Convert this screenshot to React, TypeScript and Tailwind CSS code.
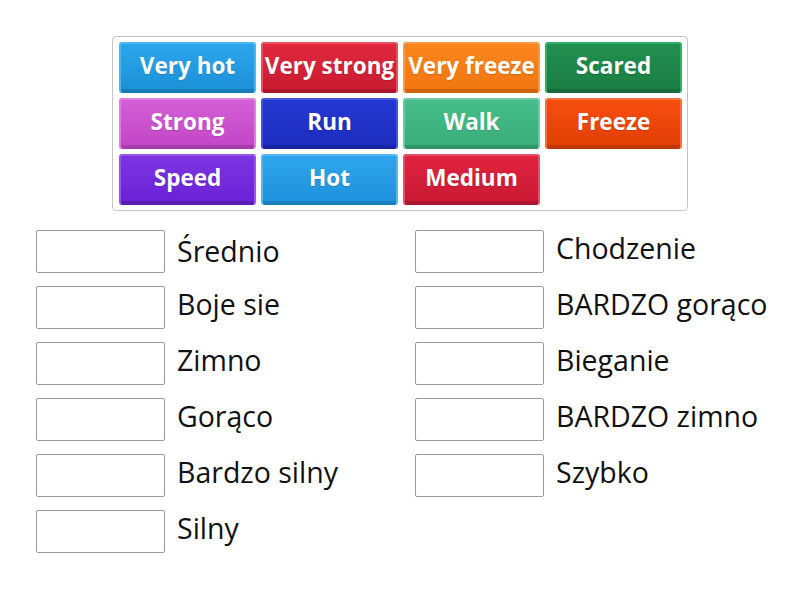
const tiles: { label: string; cls: string }[] = [
  { label: "Very hot", cls: "bg-gradient-to-b from-[#2ba6ec] to-[#1a8fd6] border-[#4cb6f0]" },
  { label: "Very strong", cls: "bg-gradient-to-b from-[#e0283e] to-[#c81a30] border-[#e6505f]" },
  { label: "Very freeze", cls: "bg-gradient-to-b from-[#fb861c] to-[#f07510] border-[#fb9a45]" },
  { label: "Scared", cls: "bg-gradient-to-b from-[#228f50] to-[#1a7d43] border-[#2fb165]" },
  { label: "Strong", cls: "bg-gradient-to-b from-[#d35fd6] to-[#c244c6] border-[#dd7fe0]" },
  { label: "Run", cls: "bg-gradient-to-b from-[#2438d2] to-[#1c2cbc] border-[#4656dc]" },
  { label: "Walk", cls: "bg-gradient-to-b from-[#46bd8a] to-[#38ad7a] border-[#6acca0]" },
  { label: "Freeze", cls: "bg-gradient-to-b from-[#f64e0e] to-[#e03e06] border-[#f87040]" },
  { label: "Speed", cls: "bg-gradient-to-b from-[#7d35e2] to-[#6a1fd6] border-[#9758e8]" },
  { label: "Hot", cls: "bg-gradient-to-b from-[#2da4ec] to-[#1e92dc] border-[#55b8f2]" },
  { label: "Medium", cls: "bg-gradient-to-b from-[#e0223f] to-[#c81a34] border-[#e65068]" },
];

const left = ["Średnio", "Boje sie", "Zimno", "Gorąco", "Bardzo silny", "Silny"];
const right = ["Chodzenie", "BARDZO gorąco", "Bieganie", "BARDZO zimno", "Szybko"];

function AnswerColumn({ items }: { items: string[] }) {
  return (
    <div className="w-[379px] shrink-0 flex flex-col gap-[13px]">
      {items.map((t) => (
        <div key={t} className="flex items-center h-[43px]">
          <div className="w-[129px] h-[43px] shrink-0 border border-[#9a9a9a] rounded-[2px] bg-white" />
          <span
            className={`ml-[12px] text-[28.5px] leading-none whitespace-nowrap text-[#111] ${
              t === "Średnio" ? "" : "-mt-[6px]"
            }`}
          >
            {t}
          </span>
        </div>
      ))}
    </div>
  );
}

export default function App() {
  return (
    <div className="w-[800px] h-[600px] bg-white font-['Open_Sans',sans-serif]">
      <div className="pt-[36px] flex justify-center">
        <div className="w-[576px] border border-[#c4c4c4] rounded-[4px] pl-[6px] pr-[6px] py-[5px]">
          <div className="grid grid-cols-[repeat(4,137px)] gap-[5px]">
            {tiles.map((t) => (
              <div
                key={t.label}
                className={`h-[51px] rounded-[3px] border-x-2 border-t-2 flex items-center justify-center text-white font-bold text-[22.5px] whitespace-nowrap shadow-[inset_0_-4px_0_rgba(0,0,0,0.14)] ${t.cls}`}
              >
                <span className="-mt-[6px] [text-shadow:0_1px_1px_rgba(0,0,0,0.15)]">{t.label}</span>
              </div>
            ))}
          </div>
        </div>
      </div>
      <div className="mt-[19px] flex pl-[36px]">
        <AnswerColumn items={left} />
        <AnswerColumn items={right} />
      </div>
    </div>
  );
}
